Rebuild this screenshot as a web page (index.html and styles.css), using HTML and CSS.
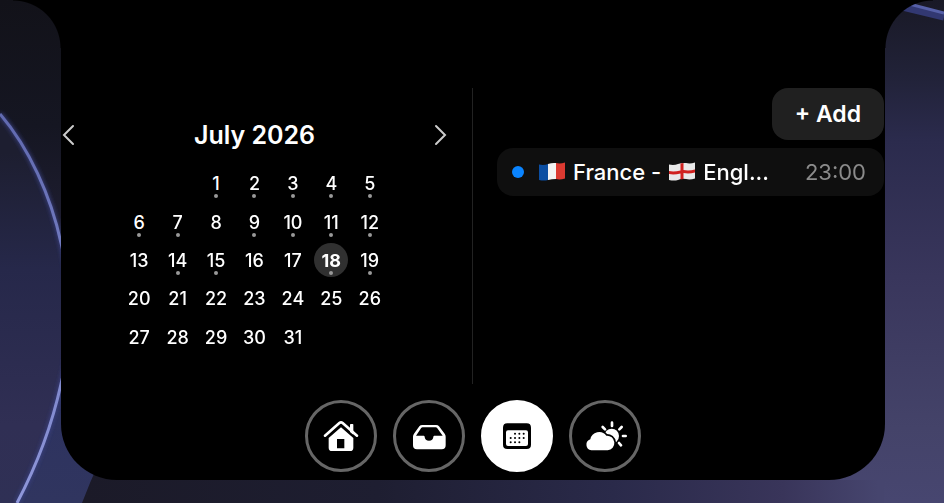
FILE: index.html
```html
<!DOCTYPE html>
<html lang="en">
<head>
    <meta charset="UTF-8">
    <meta name="viewport" content="width=device-width, initial-scale=1.0">
    <title>Calendar</title>
    <link rel="stylesheet" href="styles.css">
</head>
<body>
    <!-- wallpaper -->
    <svg class="wallpaper" viewBox="0 0 944 503" preserveAspectRatio="none" aria-hidden="true">
        <defs>
            <linearGradient id="floor" x1="0" x2="1" y1="0" y2="0">
                <stop offset="0.09" stop-color="#1b1a28"/>
                <stop offset="0.4" stop-color="#1e1e31"/>
                <stop offset="0.65" stop-color="#2a2a4a"/>
                <stop offset="0.83" stop-color="#39355a"/>
                <stop offset="0.93" stop-color="#46456e"/>
            </linearGradient>
            <linearGradient id="right" x1="0" x2="0" y1="0" y2="1">
                <stop offset="0" stop-color="#191926"/>
                <stop offset="0.15" stop-color="#212238"/>
                <stop offset="0.28" stop-color="#2b2b4d"/>
                <stop offset="0.55" stop-color="#39365c"/>
                <stop offset="0.85" stop-color="#444369"/>
                <stop offset="1" stop-color="#474670"/>
            </linearGradient>
            <linearGradient id="left" x1="0" x2="0" y1="0" y2="1">
                <stop offset="0" stop-color="#121219"/>
                <stop offset="0.25" stop-color="#151622"/>
                <stop offset="0.45" stop-color="#1e1d30"/>
                <stop offset="0.75" stop-color="#2d3260"/>
                <stop offset="1" stop-color="#30355f"/>
            </linearGradient>
            <linearGradient id="disc" x1="0" x2="0" y1="0" y2="1">
                <stop offset="0.1" stop-color="#1d1e30"/>
                <stop offset="0.4" stop-color="#26284a"/>
                <stop offset="0.8" stop-color="#302f54"/>
                <stop offset="1" stop-color="#2f3055"/>
            </linearGradient>
            <linearGradient id="rim" gradientUnits="userSpaceOnUse" x1="0" x2="0" y1="100" y2="503">
                <stop offset="0" stop-color="#5f68ae"/>
                <stop offset="1" stop-color="#8f97da"/>
            </linearGradient>
            <filter id="soft" x="-20%" y="-20%" width="140%" height="140%"><feGaussianBlur stdDeviation="2"/></filter>
        </defs>
        <rect width="944" height="503" fill="url(#floor)"/>
        <path d="M0 0H100V460Q90 482 82 503H0Z" fill="url(#left)"/>
        <path d="M840 0H944V503H884V480H840Z" fill="url(#right)"/>
        <path d="M0 114C29 148 51 196 61 243C74 295 72 345 61 384C52 425 38 463 17 503H0Z" fill="url(#disc)"/>
        <path d="M0 114C29 148 51 196 61 243C74 295 72 345 61 384C52 425 38 463 17 503" fill="none" stroke="#3a4286" stroke-width="4" filter="url(#soft)"/>
        <path d="M0 114C29 148 51 196 61 243C74 295 72 345 61 384C52 425 38 463 17 503" fill="none" stroke="url(#rim)" stroke-width="3"/>
        <path d="M890 4L944 17" stroke="#323872" stroke-width="7"/>
        <path d="M890 -1L944 13" stroke="#5660a8" stroke-width="3"/>
    </svg>

    <main class="island">
        <div class="panes">
            <section class="calendar">
                <header class="month">
                    <button type="button" class="arrow" aria-label="Previous month">
                        <svg viewBox="0 0 14 22"><path d="M12 2L3 11L12 20"/></svg>
                    </button>
                    <h1>July 2026</h1>
                    <button type="button" class="arrow" aria-label="Next month">
                        <svg viewBox="0 0 14 22"><path d="M2 2L11 11L2 20"/></svg>
                    </button>
                </header>
                <!-- the month starts on a Wednesday -->
                <div class="days">
                    <button type="button" class="day first event">1</button>
                    <button type="button" class="day event">2</button>
                    <button type="button" class="day event">3</button>
                    <button type="button" class="day event">4</button>
                    <button type="button" class="day event">5</button>
                    <button type="button" class="day event">6</button>
                    <button type="button" class="day event">7</button>
                    <button type="button" class="day">8</button>
                    <button type="button" class="day event">9</button>
                    <button type="button" class="day event">10</button>
                    <button type="button" class="day event">11</button>
                    <button type="button" class="day event">12</button>
                    <button type="button" class="day">13</button>
                    <button type="button" class="day event">14</button>
                    <button type="button" class="day event">15</button>
                    <button type="button" class="day">16</button>
                    <button type="button" class="day">17</button>
                    <button type="button" class="day event today">18</button>
                    <button type="button" class="day event">19</button>
                    <button type="button" class="day">20</button>
                    <button type="button" class="day">21</button>
                    <button type="button" class="day">22</button>
                    <button type="button" class="day">23</button>
                    <button type="button" class="day">24</button>
                    <button type="button" class="day">25</button>
                    <button type="button" class="day">26</button>
                    <button type="button" class="day">27</button>
                    <button type="button" class="day">28</button>
                    <button type="button" class="day">29</button>
                    <button type="button" class="day">30</button>
                    <button type="button" class="day">31</button>
                </div>
            </section>

            <div class="divider"></div>

            <section class="agenda">
                <button type="button" class="add">+ Add</button>
                <ul class="events">
                    <li class="item">
                        <span class="bullet"></span>
                        <span class="title">
                            <svg class="flag" viewBox="0 0 26 20" role="img" aria-label="France">
                                <path d="M0 2.500Q5 3.500 9 2V18Q5 19 0 18Z" fill="#0b4ea2"/>
                                <path d="M9 2Q13 .5 17 1V17Q13 17 9 18Z" fill="#f3f3f3"/>
                                <path d="M17 1Q21 2 26 .5V16.500Q21 18 17 17Z" fill="#dc3a31"/>
                            </svg>
                            <span>France -</span>
                            <svg class="flag" viewBox="0 0 26 20" role="img" aria-label="England">
                                <path d="M0 2.500Q5 3.500 9 2T17 1Q21 2 26 .5V16.500Q21 18 17 17T9 18Q5 19 0 18Z" fill="#e9e9e9"/>
                                <path d="M0 9Q5 10 11.500 8.500V1.500L14.500 1V8Q20 9 26 7.500V10.500Q20 12 14.500 11V17L11.500 17.500V11.500Q5 13 0 12Z" fill="#d0211f"/>
                            </svg>
                            <span>Engl...</span>
                        </span>
                        <time datetime="23:00">23:00</time>
                    </li>
                </ul>
            </section>
        </div>

        <nav class="dock">
            <button type="button" class="tab" aria-label="Home">
                <svg viewBox="0 0 108 108">
                    <path d="M81 42V20Q81 18 83 18H89Q91 18 91 20V50Z"/>
                    <path d="M6 53L49 15Q54 11 59 15L102 53" fill="none" stroke="#fff" stroke-width="8" stroke-linecap="round"/>
                    <path fill-rule="evenodd" d="M54 28L91 60V89Q91 99 81 99H27Q17 99 17 89V60ZM42 63V91H64V63Z"/>
                </svg>
            </button>
            <button type="button" class="tab" aria-label="Inbox">
                <svg viewBox="0 0 108 108">
                    <path fill-rule="evenodd" d="M34 21H75Q81 21 84 25L101 47Q104 51 104 56V82Q104 94 92 94H18Q6 94 6 82V56Q6 51 9 47L25 25Q28 21 34 21ZM35 28Q32 28 30 31L15 53H38Q41 53 41 57Q42 68 54 68T67 57Q67 53 70 53H95L79 31Q77 28 74 28Z"/>
                </svg>
            </button>
            <button type="button" class="tab active" aria-label="Calendar">
                <svg viewBox="0 0 108 108">
                    <path fill-rule="evenodd" d="M25 16H83Q96 16 96 29V80Q96 93 83 93H25Q12 93 12 80V29Q12 16 25 16ZM27 37Q21 37 21 43V78Q21 84 27 84H81Q87 84 87 78V43Q87 37 81 37Z"/>
                    <path d="M48 47h.1M61 47h.1M74 47h.1M35 60h.1M48 60h.1M61 60h.1M74 60h.1M35 73h.1M48 73h.1M61 73h.1" stroke="#000" stroke-width="6" stroke-linecap="round"/>
                </svg>
            </button>
            <button type="button" class="tab" aria-label="Weather">
                <svg viewBox="0 0 108 108">
                    <circle cx="74" cy="54" r="22"/>
                    <path d="M75 14V24M97 34L104 27M108 54H116M96 75L102 82M47 27L54 34" stroke="#fff" stroke-width="8" stroke-linecap="round"/>
                    <path d="M13 97A17 17 0 0 1 10 64A27 27 0 0 1 58 53A22 22 0 1 1 62 97Z" stroke="#000" stroke-width="10" paint-order="stroke"/>
                </svg>
            </button>
        </nav>
    </main>
</body>
</html>
```
FILE: styles.css
```css
* {margin: 0; padding: 0; box-sizing: border-box;}
body {
    min-height: 100vh;
    background: #1b1a28;
    color: #fff;
    font-family: Inter, "Liberation Sans", sans-serif;
}
button {border: 0; background: none; color: inherit; font: inherit; cursor: pointer;}
ul {list-style: none;}

.wallpaper {position: fixed; top: 0; left: 0; width: 100%; height: 100%; z-index: -1;}

/* black panel hanging from the top edge */
.island {
    position: relative;
    margin: 0 59px 0 61px;
    padding: 88px 0 8px;
    background: #000;
    border-radius: 0 0 56px 56px;
}
/* curved shoulders at both sides of the panel */
.island::before,
.island::after {
    content: "";
    position: absolute;
    top: 0;
    width: 48px;
    height: 48px;
}
.island::before {right: 100%; background: radial-gradient(circle at 0 100%, transparent 47px, #000 48px);}
.island::after {left: 100%; background: radial-gradient(circle at 100% 100%, transparent 47px, #000 48px);}

.panes {
    display: grid;
    grid-template-columns: 1fr 1px 1fr;
    gap: 24px;
    min-height: 296px;
    padding-right: 1px;
}
.divider {background: #222;}

/* calendar */
.calendar {display: flex; flex-direction: column; justify-content: center; gap: 10px;}
.month {display: flex; align-items: center; justify-content: space-between; height: 38px;}
.month h1 {font-size: 25px; font-weight: 600; line-height: 30px;}
.arrow {display: flex; width: 14px; height: 22px;}
.arrow svg {width: 100%; fill: none; stroke: #ccc; stroke-width: 2; stroke-linecap: round;}

.days {
    display: grid;
    grid-template-columns: repeat(7, 1fr);
    grid-auto-rows: 1fr;
    place-items: center;
    width: 269px;
    height: 192px;
    margin: 0 auto;
}
.day {
    position: relative;
    width: 34px;
    height: 34px;
    padding-top: 2px;
    border-radius: 50%;
    font-size: 18px;
    font-weight: 500;
    line-height: 32px;
}
.first {grid-column-start: 3;}
.today {background: #303030; font-weight: 700;}
.event::after {
    content: "";
    position: absolute;
    bottom: 2px;
    left: 15px;
    width: 4px;
    height: 4px;
    border-radius: 50%;
    background: #999;
}

/* agenda */
.agenda {display: flex; flex-direction: column; gap: 8px; min-width: 0;}
.add {
    align-self: flex-end;
    height: 52px;
    padding: 0 23px;
    border-radius: 16px;
    background: #202020;
    font-size: 23px;
    font-weight: 600;
}
.item {
    display: flex;
    align-items: center;
    height: 48px;
    padding: 0 18px 0 15px;
    border-radius: 16px;
    background: #0f0f0f;
    font-size: 22px;
}
.bullet {width: 12px; height: 12px; margin-right: 15px; border-radius: 50%; background: #0a84ff;}
.title {display: flex; align-items: center; gap: 8px; font-weight: 500; white-space: nowrap;}
.flag {width: 26px; height: 20px;}
.item time {margin-left: auto; color: #8b8b8b;}

/* bottom buttons */
.dock {display: flex; justify-content: center; gap: 16px; margin-top: 16px;}
.tab {
    display: flex;
    align-items: center;
    justify-content: center;
    width: 72px;
    height: 72px;
    border: 3px solid #666;
    border-radius: 50%;
}
.tab svg {flex: none; width: 36px; height: 36px; fill: #fff; overflow: visible;}
.tab.active {background: #fff; border-color: #fff;}
.tab.active svg {fill: #000;}
```
